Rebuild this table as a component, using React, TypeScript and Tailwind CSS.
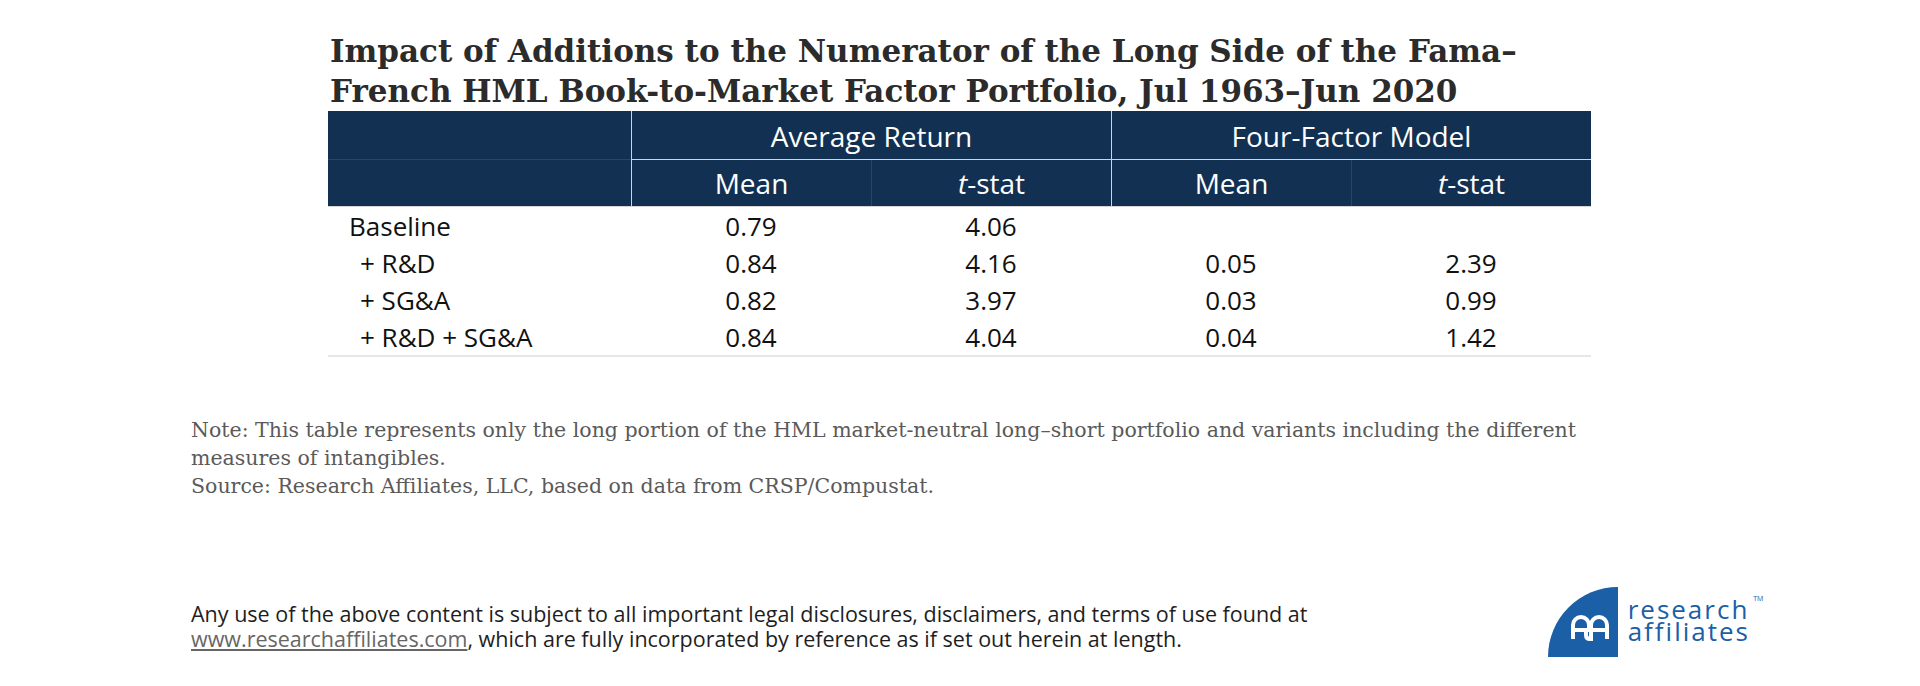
const sans = "font-['Open_Sans','Noto_Sans',sans-serif]";
const serif = "font-['DejaVu_Serif','Liberation_Serif',serif]";

type Row = { label: string; indent: boolean; values: string[] };

const rows: Row[] = [
  { label: "Baseline", indent: false, values: ["0.79", "4.06", "", ""] },
  { label: "+ R&D", indent: true, values: ["0.84", "4.16", "0.05", "2.39"] },
  { label: "+ SG&A", indent: true, values: ["0.82", "3.97", "0.03", "0.99"] },
  { label: "+ R&D + SG&A", indent: true, values: ["0.84", "4.04", "0.04", "1.42"] },
];

function TStat() {
  return (
    <span>
      <i>t</i>-stat
    </span>
  );
}

function Logo() {
  return (
    <div className="flex items-start gap-[10px]">
      <svg width="70" height="70" viewBox="0 0 70 70" className="shrink-0">
        <path d="M0 70A70 70 0 0 1 70 0V70Z" fill="#1b5fa6" />
        <g stroke="#fff" strokeWidth="4" fill="none">
          <path d="M25 52V38A8 8 0 0 1 41 38V42" />
          <path d="M43 52V38A8 8 0 0 1 59 38V52" />
          <path d="M25 43H59" />
          <path d="M38 43V48Q38 52 42 52H45" />
        </g>
      </svg>
      <div className={`${sans} mt-[11px] text-[26px] leading-[22px] tracking-[2px] text-[#1b5fa6]`}>
        <div className="relative w-fit">
          research
          <span className="absolute -right-[14px] -top-[3px] text-[7px] leading-none tracking-normal">TM</span>
        </div>
        <div>affiliates</div>
      </div>
    </div>
  );
}

export default function App() {
  return (
    <div className="w-[1920px] h-[686px] bg-white overflow-hidden">
      <div className="pl-[328px] pt-[31px]">
        <h1 className={`${serif} font-bold text-[31px] leading-[40px] text-[#2b2b2b] pl-[2px]`}>
          Impact of Additions to the Numerator of the Long Side of the Fama–
          <br />
          French HML Book-to-Market Factor Portfolio, Jul 1963–Jun 2020
        </h1>

        <div className={`${sans} w-[1263px]`}>
          <div className="grid grid-cols-[303px_240px_240px_240px_240px] bg-[#123152] text-white text-[28px]">
            <div className="h-[49px] border-b border-[#2a4566]" />
            <div className="col-span-2 h-[49px] flex items-center justify-center border-l border-b border-[#cfd4db] pt-[2px]">
              Average Return
            </div>
            <div className="col-span-2 h-[49px] flex items-center justify-center border-l border-b border-[#cfd4db] pt-[2px]">
              Four-Factor Model
            </div>
            <div className="h-[46px]" />
            <div className="h-[46px] flex items-center justify-center border-l border-[#cfd4db]">Mean</div>
            <div className="h-[46px] flex items-center justify-center border-l border-[#2a4566]">
              <TStat />
            </div>
            <div className="h-[46px] flex items-center justify-center border-l border-[#cfd4db]">Mean</div>
            <div className="h-[46px] flex items-center justify-center border-l border-[#2a4566]">
              <TStat />
            </div>
          </div>

          <div className="border-t border-[#d4d4d4] border-b-2 border-b-[#e6e6e6] text-[26px] text-[#111]">
            {rows.map((row) => (
              <div key={row.label} className="grid grid-cols-[303px_240px_240px_240px_240px] h-[37px] items-center">
                <div className={row.indent ? "pl-[32px]" : "pl-[21px]"}>{row.label}</div>
                {row.values.map((v, i) => (
                  <div key={i} className="text-center">
                    {v}
                  </div>
                ))}
              </div>
            ))}
          </div>
        </div>
      </div>

      <div className={`${serif} pl-[191px] mt-[59px] text-[20.5px] leading-[28px] text-[#5a5a5a]`}>
        <p>
          Note: This table represents only the long portion of the HML market-neutral long–short portfolio and variants including the different
          <br />
          measures of intangibles.
        </p>
        <p>Source: Research Affiliates, LLC, based on data from CRSP/Compustat.</p>
      </div>

      <div className="flex items-start justify-between pl-[191px] pr-[170px] mt-[87px]">
        <p className={`${sans} mt-[14px] text-[21.5px] leading-[25px] text-[#1e1e1e]`}>
          Any use of the above content is subject to all important legal disclosures, disclaimers, and terms of use found at
          <br />
          <span className="text-[#666] underline underline-offset-2">www.researchaffiliates.com</span>, which are fully incorporated by reference as if set out herein at length.
        </p>
        <Logo />
      </div>
    </div>
  );
}
